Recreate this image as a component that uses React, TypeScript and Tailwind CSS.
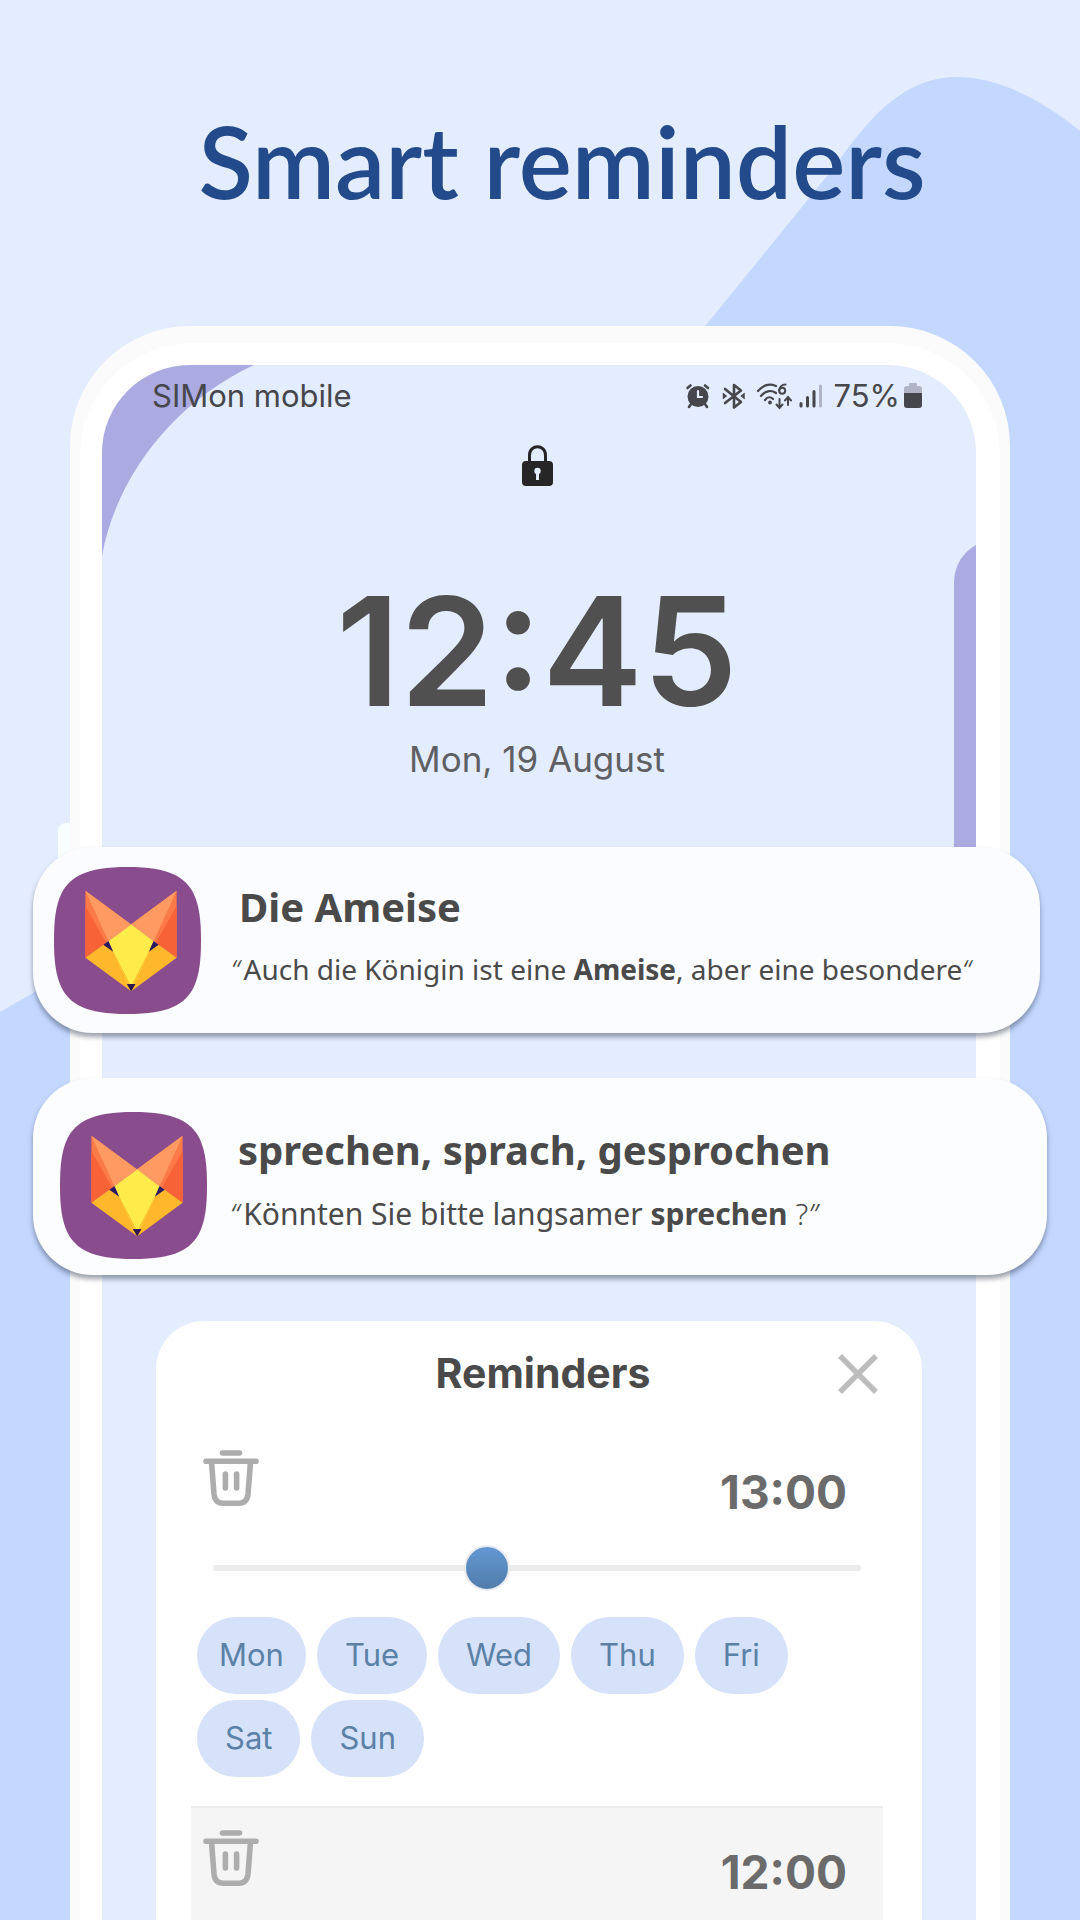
import { ReactNode, useState } from "react";

interface NotificationProps {
  title: string;
  className: string;
  bodyClassName: string;
  children: ReactNode;
}

interface ReminderHeaderProps {
  id: string;
  time: string;
}

const days = ["Mon", "Tue", "Wed", "Thu", "Fri", "Sat", "Sun"];

function Backdrop() {
  return (
    <svg
      className="absolute inset-0 h-full w-full"
      viewBox="0 0 1080 1920"
      preserveAspectRatio="none"
      aria-hidden="true"
    >
      <path
        d="M0 1012 L33 993 C250 870 420 680 560 505 L836 165 C875 108 910 77 957 77 C1000 77 1045 102 1080 131 V1920 H0 Z"
        fill="#c3d7ff"
      />
    </svg>
  );
}

function FoxLogo() {
  return (
    <svg className="size-[147px] shrink-0" viewBox="0 0 440 440" role="img" aria-label="Fox">
      <path
        d="M220 0 C345 0 392 30 417 78 C436 116 440 165 440 220 C440 275 436 324 417 362 C392 410 345 440 220 440 C95 440 48 410 23 362 C4 324 0 275 0 220 C0 165 4 116 23 78 C48 30 95 0 220 0 Z"
        fill="#894d8e"
      />
      <path d="M94 71 V272 L231 172 Z" fill="#fb7a48" />
      <path d="M94 117 V272 L156 227 Z" fill="#f76237" />
      <path d="M94 71 L231 172 L163 222 Z" fill="#ff9b62" />
      <path d="M367 71 V272 L230 172 Z" fill="#fb7a48" />
      <path d="M367 117 V272 L305 227 Z" fill="#f76237" />
      <path d="M367 71 L230 172 L298 222 Z" fill="#ff9b62" />
      <path d="M94 272 L148 233 L177 250 L231 350 L284 250 L313 233 L367 272 L231 372 Z" fill="#ffb72b" />
      <path d="M231 172 L298 222 L231 372 L163 222 Z" fill="#ffec4b" />
      <path d="M172 242 L231 372 L225 345 Z M289 242 L231 372 L237 345 Z" fill="#ffc02f" />
      <path d="M148 233 L163 222 L177 254 Z M313 233 L298 222 L284 254 Z" fill="#2c1a5f" />
      <path d="M218 350 H244 L231 373 Z" fill="#2e1650" />
    </svg>
  );
}

function StatusIcons() {
  return (
    <svg className="h-[28px] w-[138px]" viewBox="0 0 138 28" fill="none" stroke="#46474c" strokeLinecap="round" aria-hidden="true">
      {/* Alarm */}
      <circle cx="13" cy="14.5" r="10.5" fill="#46474c" stroke="none" />
      <path d="M2.5 6 L5.5 3.5 M23 6 L20 3.5 M6 22 L4 25 M20 22 L22 25" strokeWidth="2.6" />
      <path d="M13 9 V15 H17" stroke="#e4ecff" strokeWidth="2.2" />
      {/* Bluetooth */}
      <path d="M40 7 L56 20 L49 25.5 V3 L56 8.5 L40 21" strokeWidth="2.6" strokeLinejoin="round" />
      <path d="M38.5 12 V16 L41 14 Z M59 12 V16 L56.5 14 Z" fill="#46474c" strokeWidth="1.5" />
      {/* Wi-Fi */}
      <path d="M73 9 C79 2 86 2 91 4 M76 14 C81 8 87 8 91 11 M80 18 C83 14 86 15 88 17" strokeWidth="2.2" />
      <circle cx="85" cy="20.5" r="1.9" fill="#46474c" stroke="none" />
      <path d="M100.5 2.5 C97 2.5 94.5 5 94.2 8.5" strokeWidth="2" />
      <circle cx="97.2" cy="8.8" r="3" strokeWidth="2" />
      <path d="M94.5 17 V25 M91.5 22.5 L94.5 26 L97.500 22.5 M103 23 V16 M100 18.5 L103 15 L106 18.5" strokeWidth="2" />
      {/* Signal */}
      <path d="M116 21.5 V24 M122.5 15.5 V24 M129 9.5 V24" strokeWidth="3" />
      <path d="M135.5 4 V24" strokeWidth="3" stroke="#b0b4c4" />
    </svg>
  );
}

function BatteryIcon() {
  return (
    <svg className="h-[28px] w-[18px]" viewBox="0 0 18 28" aria-hidden="true">
      <path d="M5 2 Q5 1 6 1 H12 Q13 1 13 2 V4 H15 Q18 4 18 7 V11 H0 V7 Q0 4 3 4 H5 Z" fill="#b0b4c4" />
      <path d="M0 11 H18 V23 Q18 26 15 26 H3 Q0 26 0 23 Z" fill="#46474c" />
    </svg>
  );
}

function LockIcon() {
  return (
    <svg className="h-[41px] w-[31px]" viewBox="0 0 31 41" aria-hidden="true">
      <path d="M7.5 18 V10 C7.5 -1 23.5 -1 23.5 10 V18" fill="none" stroke="#262626" strokeWidth="3" />
      <rect y="16" width="31" height="25" rx="4" fill="#262626" />
      <circle cx="15.5" cy="26" r="3.2" fill="#e4ecff" />
      <path d="M14 26 H17 V35 H14 Z" fill="#e4ecff" />
    </svg>
  );
}

function TrashIcon() {
  return (
    <svg
      className="size-[56px]"
      viewBox="0 0 56 56"
      fill="none"
      stroke="#adadad"
      strokeWidth="5.6"
      strokeLinecap="round"
      aria-hidden="true"
    >
      <path d="M19.5 3 H36.5 M3 11.2 H53" />
      <path d="M8.5 12 L11 44 Q12 53.2 20 53.2 H36 Q44 53.2 45 44 L47.5 12" />
      <path d="M22.4 24 V38 M33.6 24 V38" />
    </svg>
  );
}

function Notification({ title, className, bodyClassName, children }: NotificationProps) {
  return (
    <article
      className={`relative flex items-center rounded-[60px] shadow-[0_4px_5px_rgba(60,70,90,0.5)] ${className}`}
    >
      <FoxLogo />
      <div className="pb-1 text-[#4a4a4a]">
        <h2 className="text-[40px] leading-[60px] font-bold">{title}</h2>
        <p className={`-ml-2 whitespace-nowrap ${bodyClassName}`}>{children}</p>
      </div>
    </article>
  );
}

function ReminderHeader({ id, time }: ReminderHeaderProps) {
  return (
    <div className="flex justify-between pr-9 pl-3">
      <button type="button" aria-label={`Delete reminder ${time}`} className="size-[56px]">
        <TrashIcon />
      </button>
      <h3 id={id} className="pt-3 text-[46px] leading-[60px] font-bold text-[#6b6b6b]">
        {time}
      </h3>
    </div>
  );
}

export default function App() {
  const [position, setPosition] = useState(10);
  const [selected, setSelected] = useState(days);

  const toggleDay = (day: string) => {
    setSelected(selected.includes(day) ? selected.filter((d) => d !== day) : [...selected, day]);
  };

  return (
    <main className="relative flex min-h-screen flex-col overflow-hidden bg-[#e4ecff] font-['Noto_Sans',sans-serif]">
      <Backdrop />

      <h1 className="relative pt-[100px] pb-[106px] pl-11 text-center font-['Lato',sans-serif] text-[100px] leading-[120px] font-semibold text-[#234b8b]">
        Smart reminders
      </h1>

      {/* Phone */}
      <div className="relative mx-[70px] flex flex-1 flex-col rounded-t-[120px] bg-[#fbfbfb] px-[10px] pt-[17px]">
        <div className="absolute top-[497px] -left-3 h-24 w-3 rounded-tl-lg bg-[#f8fffe]" />
        <div className="flex flex-1 flex-col rounded-t-[112px] bg-white pt-[22px] pr-6 pl-[22px]">
          <div className="relative flex flex-1 flex-col rounded-t-[88px] bg-[#e4ecff]">
            {/* Wallpaper shapes */}
            <div className="absolute inset-0 overflow-hidden rounded-t-[88px]">
              <svg className="absolute top-0 left-0 h-[191px] w-[152px]" viewBox="0 0 152 191" aria-hidden="true">
                <path d="M0 0 H152 C72 37 14 112 0 191 Z" fill="#abaae1" />
              </svg>
              <div className="absolute top-[175px] -right-8 h-[360px] w-[54px] rounded-tl-[42px] bg-[#abaae1]" />
            </div>

            {/* Status bar */}
            <div className="relative flex h-[62px] items-center justify-between pr-[54px] pl-[50px] font-['Inter',sans-serif] text-[31px] text-[#46474c]">
              <span>SIMon mobile</span>
              <div className="flex items-center gap-1">
                <StatusIcons />
                <span className="pl-1.5">75%</span>
                <BatteryIcon />
              </div>
            </div>

            {/* Lock screen */}
            <div className="relative flex flex-col items-center pt-[18px] pr-1">
              <LockIcon />
              <time className="mt-[85px] font-['Inter',sans-serif] text-[151px] leading-[160px] font-semibold text-[#505050]">
                12:45
              </time>
              <p className="pb-[60px] font-['Inter',sans-serif] text-[35px] leading-[56px] text-[#5f6064]">
                Mon, 19 August
              </p>
            </div>

            {/* Notifications */}
            <Notification
              title="Die Ameise"
              className="-mr-[64px] -ml-[69px] gap-[38px] bg-[#fafcff] pt-5 pr-6 pb-[19px] pl-[21px]"
              bodyClassName="text-[28px] leading-[64px]"
            >
              <span className="mr-1 font-light italic">“</span>Auch die Königin ist eine <b>Ameise</b>, aber eine besondere
              <span className="font-light italic">“</span>
            </Notification>
            <Notification
              title="sprechen, sprach, gesprochen"
              className="mt-[45px] -mr-[71px] -ml-[69px] gap-[31px] bg-[#fcfdff] pt-[34px] pr-6 pb-[16px] pl-[27px]"
              bodyClassName="text-[30px] leading-[68px]"
            >
              <span className="mr-1 font-light italic">“</span>Könnten Sie bitte langsamer <b>sprechen</b>{" "}
              <span className="font-light">?</span>
              <span className="font-light italic">”</span>
            </Notification>

            {/* Reminders */}
            <section className="mx-[54px] mt-[46px] flex flex-1 flex-col rounded-t-[48px] bg-white pr-[39px] pl-[35px] font-['Inter',sans-serif]">
              <header className="relative flex h-[106px] items-center justify-center">
                <h2 className="pl-3 text-[41px] font-bold text-[#4a4a4a]">Reminders</h2>
                <button type="button" aria-label="Close" className="absolute right-1 size-[42px]">
                  <svg viewBox="0 0 42 42" stroke="#bdbdbd" strokeWidth="5.5" aria-hidden="true">
                    <path d="M3 3 L39 39 M39 3 L3 39" />
                  </svg>
                </button>
              </header>

              <article className="pt-[23px]" aria-labelledby="reminder-1">
                <ReminderHeader id="reminder-1" time="13:00" />
                <div className="mb-[3px] flex h-[92px] items-center px-[22px]">
                  <input
                    type="range"
                    min={0}
                    max={24}
                    value={position}
                    onChange={(e) => setPosition(Number(e.target.value))}
                    aria-labelledby="reminder-1"
                    className="h-1.5 w-full appearance-none rounded-full bg-[#ebebeb] [&::-webkit-slider-thumb]:size-[46px] [&::-webkit-slider-thumb]:appearance-none [&::-webkit-slider-thumb]:rounded-full [&::-webkit-slider-thumb]:border-2 [&::-webkit-slider-thumb]:border-[#e8ebf0] [&::-webkit-slider-thumb]:bg-linear-to-b [&::-webkit-slider-thumb]:from-[#6498d3] [&::-webkit-slider-thumb]:to-[#507cab]"
                  />
                </div>
                <div className="flex flex-wrap gap-x-[11px] gap-y-[6px] pr-[80px] pb-[29px] pl-1.5">
                  {days.map((day) => (
                    <button
                      key={day}
                      type="button"
                      aria-pressed={selected.includes(day)}
                      onClick={() => toggleDay(day)}
                      className="h-[77px] rounded-full bg-[#d6e1fa] px-7 text-[31px] text-[#5b81a7] first:px-[22px] aria-[pressed=false]:opacity-50"
                    >
                      {day}
                    </button>
                  ))}
                </div>
              </article>

              <article className="flex-1 border-t-2 border-[#ececec] bg-[#f5f5f5] pt-[22px]" aria-labelledby="reminder-2">
                <ReminderHeader id="reminder-2" time="12:00" />
              </article>
            </section>
          </div>
        </div>
      </div>
    </main>
  );
}
